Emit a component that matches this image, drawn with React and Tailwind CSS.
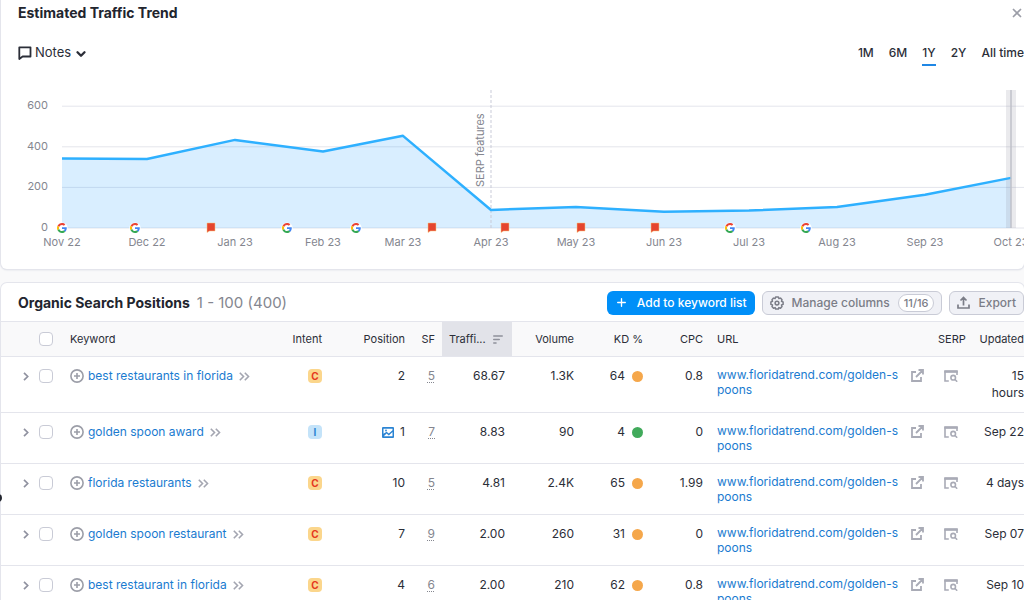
import React, { useState } from 'react';
import { X, Plus, ChevronDown } from 'lucide-react';

const TREND = [
    { x: 61, label: 'Nov 22', value: 342 },
    { x: 146, label: 'Dec 22', value: 340 },
    { x: 234, label: 'Jan 23', value: 434 },
    { x: 322, label: 'Feb 23', value: 377 },
    { x: 402, label: 'Mar 23', value: 454 },
    { x: 490, label: 'Apr 23', value: 89 },
    { x: 575, label: 'May 23', value: 103 },
    { x: 663, label: 'Jun 23', value: 80 },
    { x: 748, label: 'Jul 23', value: 86 },
    { x: 836, label: 'Aug 23', value: 104 },
    { x: 924, label: 'Sep 23', value: 164 },
    { x: 1010, label: 'Oct 23', value: 247 },
];

const GOOGLE_UPDATES = [61, 134, 286, 355, 729, 805];
const NOTES = [210, 431, 504, 580, 654];
const RANGES = ['1M', '6M', '1Y', '2Y', 'All time'];

const INTENT_COLORS = { C: 'bg-[#fbd68c] text-[#e5391f]', I: 'bg-[#c4e3f9] text-[#2b84d3]' };
const KD_COLORS = { hard: 'bg-[#f5a74b]', easy: 'bg-[#41aa5b]' };

const ROWS = [
    { keyword: 'best restaurants in florida', intent: 'C', position: 2, sf: 5, traffic: '68.67', volume: '1.3K', kd: 64, level: 'hard', cpc: '0.8', updated: '15 hours' },
    { keyword: 'golden spoon award', intent: 'I', position: 1, image: true, sf: 7, traffic: '8.83', volume: '90', kd: 4, level: 'easy', cpc: '0', updated: 'Sep 22' },
    { keyword: 'florida restaurants', intent: 'C', position: 10, sf: 5, traffic: '4.81', volume: '2.4K', kd: 65, level: 'hard', cpc: '1.99', updated: '4 days' },
    { keyword: 'golden spoon restaurant', intent: 'C', position: 7, sf: 9, traffic: '2.00', volume: '260', kd: 31, level: 'hard', cpc: '0', updated: 'Sep 07' },
    { keyword: 'best restaurant in florida', intent: 'C', position: 4, sf: 6, traffic: '2.00', volume: '210', kd: 62, level: 'hard', cpc: '0.8', updated: 'Sep 10' },
];

const yFor = v => 148 - v * 0.203;

const NoteIcon = () => (
    <svg width="14" height="14" viewBox="0 0 14 14" fill="none" stroke="currentColor" strokeWidth="1.8">
        <path d="M1.3 1.3h11.2v9.2H4.6L1.3 13z" strokeLinejoin="round" />
    </svg>
);

const GoogleMark = ({ x, y }) => (
    <g transform={`translate(${x - 5} ${y - 5}) scale(0.2083)`}>
        <circle cx="24" cy="24" r="27" fill="#fff" />
        <path fill="#EA4335" d="M24 9.5c3.54 0 6.71 1.22 9.21 3.6l6.85-6.85C35.9 2.38 30.47 0 24 0 14.62 0 6.51 5.38 2.56 13.22l7.98 6.19C12.43 13.72 17.74 9.5 24 9.5z" />
        <path fill="#4285F4" d="M46.98 24.55c0-1.57-.15-3.09-.38-4.55H24v9.02h12.94c-.58 2.96-2.26 5.48-4.78 7.18l7.73 6c4.51-4.18 7.09-10.36 7.09-17.65z" />
        <path fill="#FBBC05" d="M10.53 28.59c-.48-1.45-.76-2.99-.76-4.59s.27-3.14.76-4.59l-7.98-6.19C.92 16.46 0 20.12 0 24c0 3.88.92 7.54 2.56 10.78l7.97-6.19z" />
        <path fill="#34A853" d="M24 48c6.48 0 11.93-2.13 15.89-5.81l-7.73-6c-2.15 1.45-4.92 2.3-8.16 2.3-6.26 0-11.57-4.22-13.47-9.91l-7.98 6.19C6.51 42.62 14.62 48 24 48z" />
    </g>
);

const GearIcon = () => (
    <svg width="14" height="14" viewBox="0 0 14 14" fill="none" stroke="currentColor" strokeWidth="1.5" strokeLinejoin="round">
        <path d="M5.6 1h2.8l.5 1.6 1.6-.5 1.5 1.6-.5 1.7 1.6.6v2.4l-1.6.6.5 1.5-1.5 1.7-1.6-.6-.5 1.5H5.6l-.5-1.5-1.6.6L2 10.5 2.5 9 .9 8.4V6l1.6-.6L2 3.7l1.5-1.6 1.6.5z" />
        <circle cx="7" cy="7.1" r="1.9" />
    </svg>
);

const ExportIcon = () => (
    <svg width="13" height="13" viewBox="0 0 13 13" fill="none" stroke="currentColor" strokeWidth="1.7">
        <path d="M1 8.5V12h11V8.5M6.5 9.5V2M3.5 4.5l3-3 3 3" />
    </svg>
);

const SortIcon = () => (
    <svg width="10" height="9" viewBox="0 0 10 9" stroke="#8f919b" strokeWidth="1.6" strokeLinecap="round">
        <path d="M.8 1h8.4M.8 4.5h5.4M.8 8h2.2" />
    </svg>
);

const ChevronIcon = () => (
    <svg width="6" height="9" viewBox="0 0 6 9" fill="none" stroke="#9092a0" strokeWidth="1.7">
        <path d="M1 .8l3.7 3.7L1 8.2" />
    </svg>
);

const DoubleChevronIcon = () => (
    <svg width="11" height="9" viewBox="0 0 11 9" fill="none" stroke="#a4a6b1" strokeWidth="1.6">
        <path d="M.8.8l3.7 3.7L.8 8.2M5.8.8l3.7 3.7-3.7 3.7" />
    </svg>
);

const AddCircleIcon = () => (
    <svg width="14" height="14" viewBox="0 0 14 14" fill="none" stroke="#9c9ea8" strokeWidth="1.6">
        <circle cx="7" cy="7" r="6.1" />
        <path d="M7 4v6M4 7h6" />
    </svg>
);

const ExternalIcon = () => (
    <svg width="13" height="13" viewBox="0 0 13 13" fill="none" stroke="#a9abb6" strokeWidth="1.8">
        <path d="M5 3H1v9h9V8M7.5 1H12v4.5M12 1L5 8" />
    </svg>
);

const SerpIcon = () => (
    <svg width="14" height="12" viewBox="0 0 14 12" fill="none" stroke="#a9abb6" strokeWidth="1.6">
        <path d="M4.8 11H1V1.5h12V5" />
        <path d="M.3 1.5h13.4" strokeWidth="2.6" />
        <circle cx="9.2" cy="7.7" r="2.3" />
        <path d="M10.8 9.3l2.4 2.4" />
    </svg>
);

const ImageIcon = () => (
    <svg width="12" height="11" viewBox="0 0 12 11">
        <rect width="12" height="11" rx="1" fill="#2b84d3" />
        <path d="M1.5 6.8V1.8h9v1.4L6.8 6.6 4.6 4.7z" fill="#fff" />
        <path d="M1.8 9.2l2.8-2.7 2.2 2 3.7-3.5v4.2z" fill="#fff" />
        <circle cx="4" cy="3.5" r="0.9" fill="#2b84d3" />
    </svg>
);

const Checkbox = ({ label }) => (
    <input type="checkbox" aria-label={label} className="block w-3.5 h-3.5 appearance-none rounded border border-[#c9cbd6] bg-white checked:bg-[#008ff8]" />
);

const TrafficChart = () => {
    const line = TREND.map(p => `${p.x},${yFor(p.value)}`).join(' ');

    return (
        <svg viewBox="0 0 1023 176" className="block w-full" role="img" aria-label="Estimated traffic by month">
            {[0, 200, 400, 600].map(v => (
                <g key={v}>
                    <line x1="61" x2="1023" y1={yFor(v)} y2={yFor(v)} stroke="#e4e5ec" />
                    <text x="47" y={yFor(v) + 3} textAnchor="end" className="text-[11px] fill-[#84868f]">{v}</text>
                </g>
            ))}
            <polygon points={`61,148 ${line} 1010,148`} fill="#2b9fff" fillOpacity="0.18" />
            <rect x="1005" y="10" width="10" height="138" fill="#898d9a" fillOpacity="0.18" />
            <line x1="490" x2="490" y1="10" y2="148" stroke="#c9cbd8" strokeDasharray="3 2" />
            <text transform="translate(483 107) rotate(-90)" className="text-[11px] fill-[#84868f]">SERP features</text>
            <polyline points={line} fill="none" stroke="#2eb0ff" strokeWidth="2.5" strokeLinejoin="round" />
            <line x1="1010" x2="1010" y1="10" y2="148" stroke="#bfc1c9" strokeWidth="1.5" />
            {GOOGLE_UPDATES.map(x => <GoogleMark key={x} x={x} y={148} />)}
            {NOTES.map(x => (
                <path key={x} d={`M${x - 4} 143h8v8h-5.5l-2.5 1.5z`} fill="#e5452f" stroke="#f9c57c" strokeWidth="0.5" />
            ))}
            {TREND.map(p => (
                <text key={p.label} x={p.x} y="166" textAnchor="middle" className="text-[11px] fill-[#84868f]">{p.label}</text>
            ))}
        </svg>
    );
};

const TH = 'px-[7px] font-normal';
const TD = 'px-[7px] pt-2.5 align-top';

const App = () => {
    const [range, setRange] = useState('1Y');

    return (
        <div className="relative h-screen overflow-hidden bg-[#f9f9fa] pl-px font-['Inter',sans-serif] text-xs text-[#2b2e38]">
            <section className="bg-white rounded-b-md shadow-[0_0_0_1px_#e4e5ec,0_1px_2px_#d5d7e0] mb-3.5">
                <div className="flex items-center justify-between h-[26px] pl-[17px]">
                    <h2 className="text-sm font-bold text-[#22252e]">Estimated Traffic Trend</h2>
                    <button aria-label="Close" className="text-[#9c9ea8]"><X size={14} strokeWidth={3} /></button>
                </div>
                <div className="flex items-start justify-between h-[54px] pt-[18px] pl-[17px]">
                    <button className="flex items-center gap-[3px] h-[18px] text-[13px]">
                        <NoteIcon />
                        <span>Notes</span>
                        <ChevronDown size={14} strokeWidth={4} className="mt-0.5" />
                    </button>
                    <div className="flex gap-[15px] font-medium">
                        {RANGES.map(r => (
                            <button key={r} onClick={() => setRange(r)} className={`h-[22px] pb-0.5 border-b-2 whitespace-nowrap ${range === r ? 'border-[#1f87e5]' : 'border-transparent'}`}>{r}</button>
                        ))}
                    </div>
                </div>
                <TrafficChart />
                <div className="h-[13px]" />
            </section>

            <section className="bg-white rounded-t-md shadow-[0_0_0_1px_#e4e5ec]">
                <div className="flex items-center h-[38px] pt-px pl-[17px] gap-[7px]">
                    <h2 className="text-sm font-bold text-[#22252e] whitespace-nowrap">Organic Search Positions</h2>
                    <span className="flex-1 text-[15px] text-[#84868f] whitespace-nowrap">1 - 100 (400)</span>
                    <button className="flex items-center gap-[9px] h-6 px-2 rounded-md bg-[#008ff8] text-white font-medium whitespace-nowrap">
                        <Plus size={13} strokeWidth={2.5} /> Add to keyword list
                    </button>
                    <button className="flex items-center gap-2 h-6 px-[7px] rounded-md border border-[#c9cbd6] bg-[#f0f1f6] text-[#7b7d87] font-medium whitespace-nowrap">
                        <GearIcon /> Manage columns
                        <span className="px-[5px] leading-4 rounded-full border border-[#c9cbd6] bg-white text-[11px]">11/16</span>
                    </button>
                    <button className="flex items-center gap-2 h-6 px-[7px] rounded-md border border-[#c9cbd6] bg-[#f0f1f6] text-[#7b7d87] font-medium">
                        <ExportIcon /> Export
                    </button>
                </div>

                <table className="w-full table-fixed border-collapse">
                    <colgroup>
                        <col className="w-[31px]" />
                        <col className="w-[31px]" />
                        <col />
                        <col className="w-[50px]" />
                        <col className="w-[83px]" />
                        <col className="w-[30px]" />
                        <col className="w-[70px]" />
                        <col className="w-[69px]" />
                        <col className="w-[69px]" />
                        <col className="w-[60px]" />
                        <col className="w-[221px]" />
                        <col className="w-[40px]" />
                        <col className="w-[53px]" />
                    </colgroup>
                    <thead>
                        <tr className="h-[35px] bg-[#f9f9fa] border-y border-[#e4e5ec] text-[11px] text-right">
                            <th aria-label="Expand" />
                            <th className={TH}><Checkbox label="Select all keywords" /></th>
                            <th className={`${TH} text-left`}>Keyword</th>
                            <th className={TH}>Intent</th>
                            <th className={TH}>Position</th>
                            <th className={TH}>SF</th>
                            <th className={`${TH} bg-[#e2e3e9]`}>
                                <div className="flex items-center justify-between pr-0.5">
                                    <span>Traffi...</span>
                                    <SortIcon />
                                </div>
                            </th>
                            <th className={TH}>Volume</th>
                            <th className={TH}>KD %</th>
                            <th className={TH}>CPC</th>
                            <th className={`${TH} text-left`}>URL</th>
                            <th className={TH}>SERP</th>
                            <th className="font-normal">Updated</th>
                        </tr>
                    </thead>
                    <tbody>
                        {ROWS.map(r => (
                            <tr key={r.keyword} className="border-b border-[#e4e5ec] text-right leading-[18px]">
                                <td className="pt-2.5 align-top">
                                    <button aria-label={`Expand ${r.keyword}`} className="flex items-center h-[18px] ml-auto mr-[3px]"><ChevronIcon /></button>
                                </td>
                                <td className={TD}>
                                    <div className="flex items-center h-[18px]"><Checkbox label={`Select ${r.keyword}`} /></div>
                                </td>
                                <td className={TD}>
                                    <div className="flex items-center whitespace-nowrap">
                                        <button aria-label={`Add ${r.keyword}`}><AddCircleIcon /></button>
                                        <a href="#keyword" className="ml-1 mr-1.5 text-[#1a7bd0]">{r.keyword}</a>
                                        <DoubleChevronIcon />
                                    </div>
                                </td>
                                <td className={TD}>
                                    <div className="flex items-center justify-end h-[18px]">
                                        <span className={`w-3.5 h-3.5 rounded text-[10px] leading-[14px] font-bold text-center ${INTENT_COLORS[r.intent]}`}>{r.intent}</span>
                                    </div>
                                </td>
                                <td className={TD}>
                                    <div className="flex items-center justify-end gap-1.5">
                                        {r.image && <ImageIcon />}
                                        {r.position}
                                    </div>
                                </td>
                                <td className={TD}>
                                    <a href="#features" className="text-[#84868f] underline decoration-dotted underline-offset-2">{r.sf}</a>
                                </td>
                                <td className={TD}>{r.traffic}</td>
                                <td className={TD}>{r.volume}</td>
                                <td className={TD}>
                                    <div className="flex items-center justify-end gap-[7px]">
                                        {r.kd}
                                        <span className={`w-[11px] h-[11px] rounded-full ${KD_COLORS[r.level]}`} />
                                    </div>
                                </td>
                                <td className={TD}>{r.cpc}</td>
                                <td className="px-[7px] py-2.5 align-top">
                                    <div className="flex gap-2.5 text-left leading-[15px]">
                                        <a href="#golden-spoons" className="w-[184px] break-all text-[#1a7bd0]">www.floridatrend.com/golden-spoons</a>
                                        <span className="pt-0.5"><ExternalIcon /></span>
                                    </div>
                                </td>
                                <td className={TD}>
                                    <button aria-label="View SERP" className="flex items-center justify-center w-full h-[18px]"><SerpIcon /></button>
                                </td>
                                <td className="pt-2.5 pb-[11px] pl-2 align-top leading-[17px]">{r.updated}</td>
                            </tr>
                        ))}
                    </tbody>
                </table>
            </section>

            {/* collapsed sidebar handle */}
            <span className="absolute -left-1.5 top-[494px] w-2 h-2 rounded-full bg-[#22252e]" />
        </div>
    );
};

export default App;
